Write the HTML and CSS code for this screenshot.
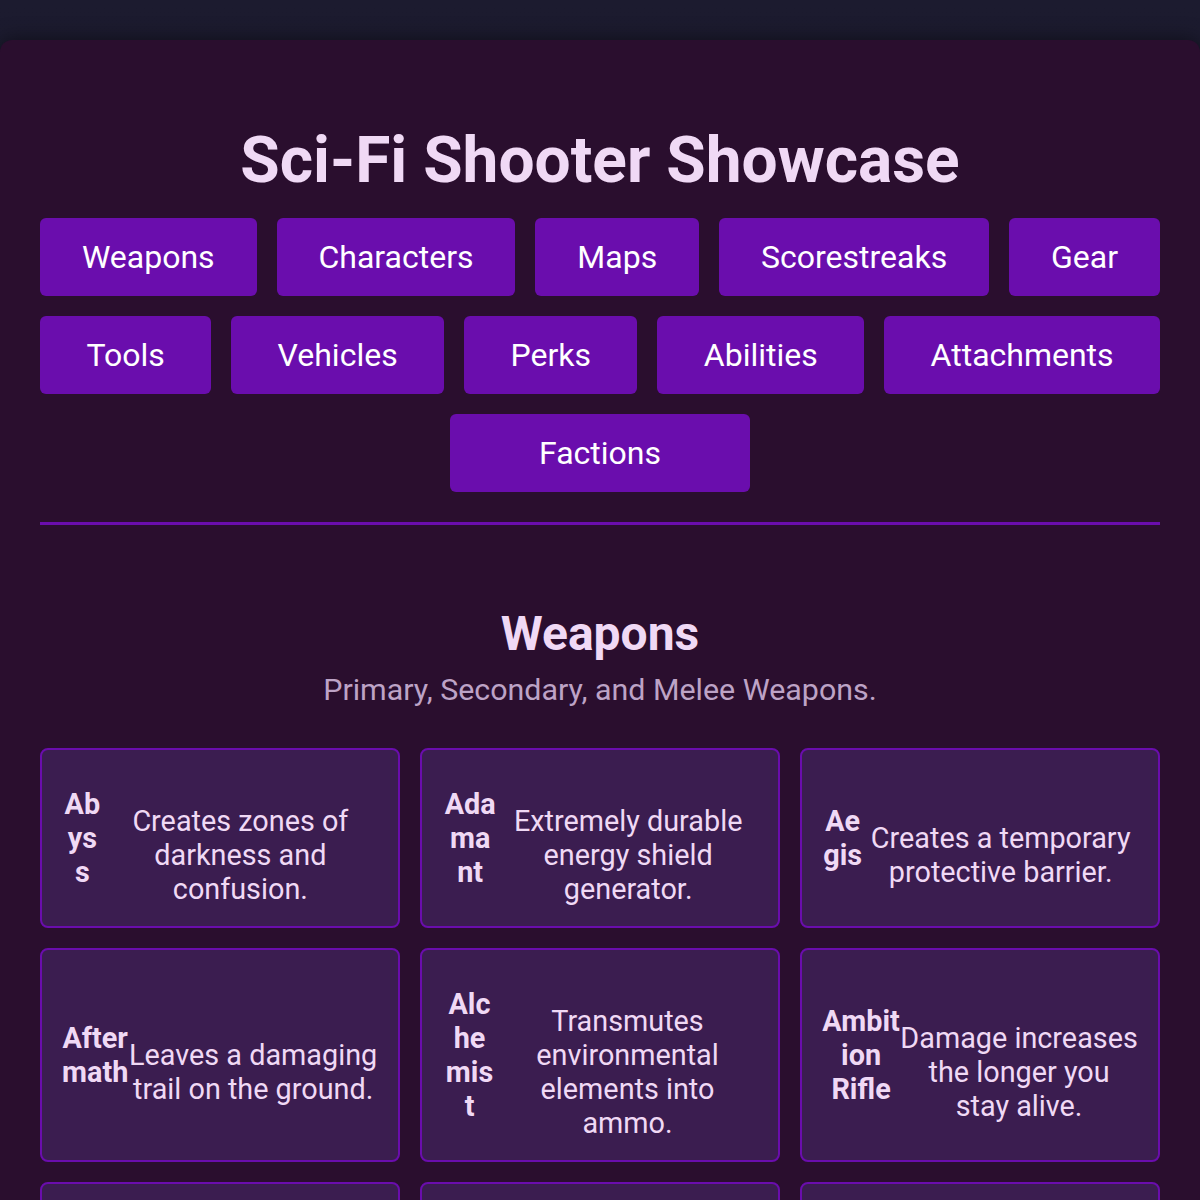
FILE: index.html
```html
<!DOCTYPE html>
<html lang="en">
<head>
<meta charset="utf-8">
<title>Sci-Fi Shooter Showcase</title>
<link rel="stylesheet" href="styles.css">
</head>
<body>
<div class="container">
  <h1 class="title">Sci-Fi Shooter Showcase</h1>
  <nav class="tabs">
    <button class="tab">Weapons</button>
    <button class="tab">Characters</button>
    <button class="tab">Maps</button>
    <button class="tab">Scorestreaks</button>
    <button class="tab">Gear</button>
    <button class="tab">Tools</button>
    <button class="tab">Vehicles</button>
    <button class="tab">Perks</button>
    <button class="tab">Abilities</button>
    <button class="tab">Attachments</button>
    <button class="tab">Factions</button>
  </nav>
  <section class="section">
    <h2 class="section-title">Weapons</h2>
    <p class="section-sub">Primary, Secondary, and Melee Weapons.</p>
    <div class="grid">
      <div class="card"><div class="name">Abyss</div><div class="desc">Creates zones of darkness and confusion.</div></div>
      <div class="card"><div class="name">Adamant</div><div class="desc">Extremely durable energy shield generator.</div></div>
      <div class="card"><div class="name">Aegis</div><div class="desc">Creates a temporary protective barrier.</div></div>
      <div class="card"><div class="name">Aftermath</div><div class="desc">Leaves a damaging trail on the ground.</div></div>
      <div class="card"><div class="name">Alchemist</div><div class="desc">Transmutes environmental elements into ammo.</div></div>
      <div class="card"><div class="name">Ambition Rifle</div><div class="desc">Damage increases the longer you stay alive.</div></div>
      <div class="card"><div class="name">Annihilator</div><div class="desc">Fires a devastating beam of pure energy.</div></div>
      <div class="card"><div class="name">Apex</div><div class="desc">High-precision long range marksman rifle.</div></div>
      <div class="card"><div class="name">Arbiter</div><div class="desc">Judges targets and marks them for allies.</div></div>
    </div>
  </section>
</div>
</body>
</html>
```
FILE: styles.css
```css
html, body {
  margin: 0;
  padding: 0;
}
body {
  background: linear-gradient(180deg, #1c1b2f 0%, #16132a 100%);
  font-family: Roboto, "Noto Sans", Arial, sans-serif;
  color: #f0d9f5;
  min-height: 100vh;
}
.container {
  margin-top: 40px;
  background: #2a0e2e;
  border-radius: 12px;
  padding: 40px;
  box-shadow: 0 0 20px rgba(0, 0, 0, 0.5);
}
.title {
  margin: 43px 0 20px;
  text-align: center;
  font-size: 64px;
  font-weight: 700;
  line-height: 75px;
  color: #f0d9f5;
}
.tabs {
  display: flex;
  flex-wrap: wrap;
  justify-content: center;
  gap: 20px;
  padding-bottom: 30px;
  border-bottom: 3px solid #6a0dad;
}
.tab {
  flex: 1 1 auto;
  max-width: 300px;
  background: #6a0dad;
  color: #ffffff;
  border: none;
  border-radius: 6px;
  padding: 20px 30px;
  font-family: Roboto, "Noto Sans", Arial, sans-serif;
  font-size: 32px;
  line-height: 38px;
  cursor: pointer;
}
.section {
  padding-top: 81px;
}
.section-title {
  margin: 0;
  text-align: center;
  font-size: 48px;
  font-weight: 700;
  line-height: 56px;
}
.section-sub {
  margin: 10px 0 40px;
  text-align: center;
  font-size: 30.4px;
  line-height: 36px;
  color: #bda3c6;
}
.grid {
  display: grid;
  grid-template-columns: repeat(3, 1fr);
  gap: 20px;
}
.card {
  display: flex;
  align-items: center;
  background: #3b1d50;
  border: 2px solid #6a0dad;
  border-radius: 8px;
  padding: 20.5px 20px;
}
.name {
  font-weight: 700;
  font-size: 28.8px;
  line-height: 34px;
  text-align: center;
  overflow-wrap: anywhere;
}
.desc {
  margin-top: 33px;
  font-size: 28.8px;
  line-height: 34px;
  text-align: center;
  overflow-wrap: anywhere;
}
```
